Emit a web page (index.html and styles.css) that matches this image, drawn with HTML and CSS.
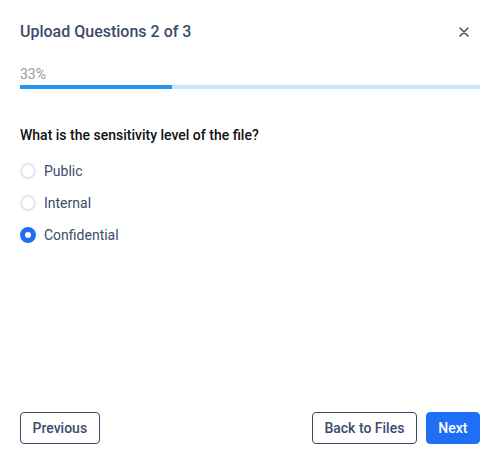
FILE: index.html
```html
<!DOCTYPE html>
<html>
<head>
<meta charset="utf-8">
<title>Upload Questions</title>
<link rel="stylesheet" href="styles.css">
</head>
<body>
<div class="dialog">
    <div class="head">
        <h2 class="title">Upload Questions 2 of 3</h2>
        <a href="javascript:;" class="close">
            <svg width="10" height="10" viewBox="0 0 10 10"><path d="M1 1L9 9M9 1L1 9" stroke="#3c4b6b" stroke-width="1.5" stroke-linecap="round"/></svg>
        </a>
    </div>
    <div class="pct">33%</div>
    <div class="pro_box"><div class="pro_bar" style="width:33%"></div></div>

    <p class="question">What is the sensitivity level of the file?</p>
    <ul class="opts">
        <li><span class="radio"></span>Public</li>
        <li><span class="radio"></span>Internal</li>
        <li><span class="radio on"></span>Confidential</li>
    </ul>

    <div class="foot">
        <a href="javascript:;" class="btn">Previous</a>
        <div class="right">
            <a href="javascript:;" class="btn">Back to Files</a>
            <a href="javascript:;" class="btn primary">Next</a>
        </div>
    </div>
</div>
</body>
</html>
```
FILE: styles.css
```css
*{margin:0; padding:0;}
body{background:#fff;font-family:Roboto,"Liberation Sans",Arial,sans-serif;}
.dialog{width:460px;height:424px;padding:20px;display:flex;flex-direction:column;}
.head{display:flex;justify-content:space-between;align-items:center;height:24px;}
.title{font-size:16px;font-weight:500;color:#3c4b6b;line-height:24px;}
.close{display:block;width:10px;height:10px;margin-right:11px;}
.close svg{display:block;}
.pct{margin-top:21px;font-size:14px;line-height:18px;color:#999;}
.pro_box{margin-top:2px;height:4px;background:#c6e4fc;position:relative;}
.pro_bar{height:100%;background:#2196f3;}
.question{margin-top:36px;font-size:14px;font-weight:500;line-height:20px;color:#111;}
.opts{list-style:none;margin-top:14px;}
.opts li{display:flex;align-items:center;height:24px;margin-bottom:8px;font-size:14px;color:#3c4b6b;}
.radio{width:12px;height:12px;border:2px solid #e6e8ee;border-radius:50%;margin-right:8px;display:block;}
.radio.on{border:5px solid #1f6ff6;width:6px;height:6px;background:#fff;}
.foot{margin-top:auto;display:flex;justify-content:space-between;}
.right{display:flex;gap:9px;}
.btn{display:block;height:30px;line-height:30px;padding:0 11.5px;border:1px solid #3c4b6b;border-radius:4px;font-size:14px;font-weight:500;color:#3c4b6b;text-decoration:none;}
.btn.primary{background:#1f6ff6;border-color:#1f6ff6;color:#fff;}
```
